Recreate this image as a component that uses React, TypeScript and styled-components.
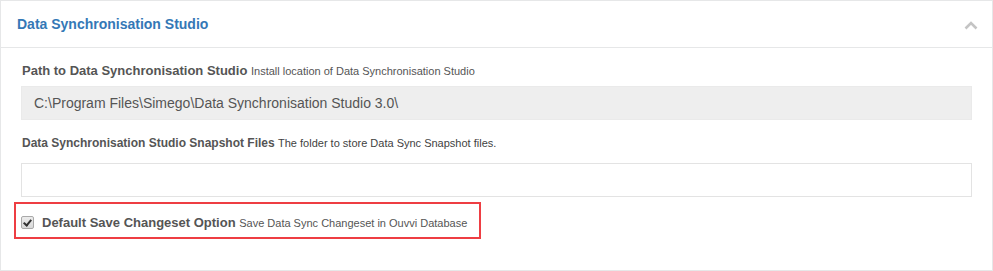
import React from 'react';
import styled, { createGlobalStyle } from 'styled-components';

const GlobalStyle = createGlobalStyle`
    body {
        margin: 0;
        background: #fff;
        font-family: "Liberation Sans", Arial, sans-serif;
    }
`;

const Panel = styled.div`
    width: 991px;
    height: 269px;
    border: 1px solid #e6e7e8;
    background: #fff;
`;

const PanelHeader = styled.div`
    height: 46px;
    display: flex;
    align-items: center;
    justify-content: space-between;
    padding: 0 14px 0 16px;
    border-bottom: 1px solid #e6e7e8;
`;

const Title = styled.h3`
    margin: 0;
    font-size: 14px;
    font-weight: bold;
    color: #3478b6;
`;

const Chevron = styled.svg`
    width: 14px;
    height: 9px;
    margin-top: 3px;
`;

const PanelBody = styled.div`
    padding: 14px 20px 0 20px;
`;

const Field = styled.div`
    margin-bottom: 14px;
`;

const Label = styled.label<{ $gap: number; $size?: number }>`
    display: block;
    font-size: ${p => p.$size ?? 13}px;
    line-height: 18px;
    font-weight: bold;
    color: #555;
    margin: 0 0 ${p => p.$gap}px 1px;
`;

const Hint = styled.span<{ $dark?: boolean }>`
    font-size: 11px;
    font-weight: normal;
    color: ${p => (p.$dark ? '#3f3f3f' : '#555')};
`;

const TextInput = styled.input`
    box-sizing: border-box;
    display: block;
    width: 951px;
    height: 34px;
    padding: 0 12px;
    font-family: "Liberation Sans", Arial, sans-serif;
    font-size: 14px;
    color: #555;
    background: ${p => (p.readOnly ? '#eee' : '#fff')};
    border: 1px solid ${p => (p.readOnly ? '#eaeaea' : '#e3e3e3')};
    border-radius: 0;
    outline: none;
`;

const Highlight = styled.div`
    box-sizing: border-box;
    width: 467px;
    height: 37px;
    margin: -9px 0 0 -7px;
    border: 2px solid #ee3e43;
    display: flex;
    align-items: center;
    padding: 4px 0 0 5px;
`;

const CheckLabel = styled.label`
    display: flex;
    align-items: center;
    gap: 8px;
    font-size: 13px;
    font-weight: bold;
    color: #555;
    white-space: nowrap;
`;

const Check = styled.input`
    appearance: none;
    box-sizing: border-box;
    margin: 0;
    width: 13px;
    height: 13px;
    border: 1px solid #a9a9a9;
    border-radius: 2px;
    background: linear-gradient(#ececec, #d9d9d9);
    position: relative;
    &:checked::after {
        content: '';
        position: absolute;
        left: 3px;
        top: 1px;
        width: 3px;
        height: 6px;
        border: solid #333;
        border-width: 0 2px 2px 0;
        transform: rotate(40deg);
    }
`;

const App: React.FC = () => {
    return (
        <>
            <GlobalStyle />
            <Panel>
                <PanelHeader>
                    <Title>Data Synchronisation Studio</Title>
                    <Chevron viewBox="0 0 14 9">
                        <path d="M1.5 7.5 L7 2 L12.5 7.5" fill="none" stroke="#c4c4c4" strokeWidth="2.6" />
                    </Chevron>
                </PanelHeader>
                <PanelBody>
                    <Field>
                        <Label $gap={6}>
                            Path to Data Synchronisation Studio <Hint>Install location of Data Synchronisation Studio</Hint>
                        </Label>
                        <TextInput readOnly value={'C:\\Program Files\\Simego\\Data Synchronisation Studio 3.0\\'} />
                    </Field>
                    <Field>
                        <Label $gap={11} $size={12}>
                            Data Synchronisation Studio Snapshot Files <Hint $dark>The folder to store Data Sync Snapshot files.</Hint>
                        </Label>
                        <TextInput defaultValue="" />
                    </Field>
                    <Highlight>
                        <CheckLabel>
                            <Check type="checkbox" defaultChecked />
                            <span>
                                Default Save Changeset Option <Hint>Save Data Sync Changeset in Ouvvi Database</Hint>
                            </span>
                        </CheckLabel>
                    </Highlight>
                </PanelBody>
            </Panel>
        </>
    );
};

export default App;
